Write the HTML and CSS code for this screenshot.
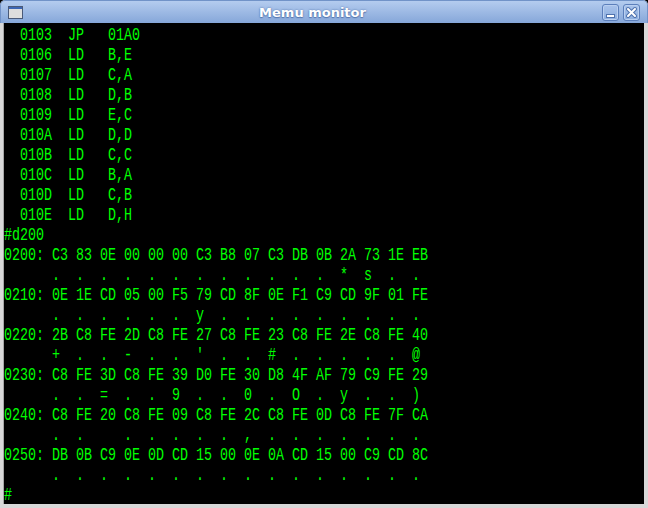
FILE: index.html
```html
<!DOCTYPE html>
<html lang="en">
<head>
    <meta charset="UTF-8">
    <title>Memu monitor</title>
    <link rel="stylesheet" href="styles.css">
</head>
<body>
    <div class="window">
        <div class="titlebar">
            <span class="app-icon">
                <svg width="15" height="13" viewBox="0 0 15 13">
                    <rect x="0.5" y="0.5" width="14" height="12" fill="#e6e6e6" stroke="#4a5a78"/>
                    <rect x="1" y="1" width="13" height="2" fill="#3d66b3"/>
                    <rect x="1" y="3" width="13" height="9" fill="#d9d9d9" opacity="0.6"/>
                </svg>
            </span>
            <span class="title">Memu monitor</span>
            <span class="controls">
                <button class="wbtn">
                    <svg width="15" height="15" viewBox="0 0 15 15">
                        <rect x="3.5" y="9.5" width="8" height="3" fill="#fff" stroke="#4f72ad"/>
                    </svg>
                </button>
                <button class="wbtn">
                    <svg width="15" height="15" viewBox="0 0 15 15">
                        <path d="M4 4 L11 11 M11 4 L4 11" stroke="#4f72ad" stroke-width="4" stroke-linecap="round"/>
                        <path d="M4 4 L11 11 M11 4 L4 11" stroke="#fff" stroke-width="2" stroke-linecap="round"/>
                    </svg>
                </button>
            </span>
        </div>
        <div class="frame">
            <div class="screen">
<pre class="term">  0103  JP   01A0
  0106  LD   B,E
  0107  LD   C,A
  0108  LD   D,B
  0109  LD   E,C
  010A  LD   D,D
  010B  LD   C,C
  010C  LD   B,A
  010D  LD   C,B
  010E  LD   D,H
#d200
0200: C3 83 0E 00 00 00 C3 B8 07 C3 DB 0B 2A 73 1E EB
      .  .  .  .  .  .  .  .  .  .  .  .  *  s  .  .
0210: 0E 1E CD 05 00 F5 79 CD 8F 0E F1 C9 CD 9F 01 FE
      .  .  .  .  .  .  y  .  .  .  .  .  .  .  .  .
0220: 2B C8 FE 2D C8 FE 27 C8 FE 23 C8 FE 2E C8 FE 40
      +  .  .  -  .  .  '  .  .  #  .  .  .  .  .  @
0230: C8 FE 3D C8 FE 39 D0 FE 30 D8 4F AF 79 C9 FE 29
      .  .  =  .  .  9  .  .  0  .  O  .  y  .  .  )
0240: C8 FE 20 C8 FE 09 C8 FE 2C C8 FE 0D C8 FE 7F CA
      .  .     .  .  .  .  .  ,  .  .  .  .  .  .  .
0250: DB 0B C9 0E 0D CD 15 00 0E 0A CD 15 00 C9 CD 8C
      .  .  .  .  .  .  .  .  .  .  .  .  .  .  .  .
#</pre>
            </div>
        </div>
    </div>
</body>
</html>
```

FILE: styles.css
```css
body { margin: 0; background: #000; font-family: "DejaVu Sans", sans-serif; }
.window { width: 648px; height: 508px; display: flex; flex-direction: column; background: #d6d6d6; border-radius: 5px 5px 0 0; overflow: hidden; }
.titlebar { height: 23px; flex: none; display: flex; align-items: center; box-sizing: border-box; padding: 0 7px 0 7px; background: linear-gradient(#b4ccef, #86a7d9); border: 1px solid #7193c8; border-bottom: none; border-radius: 5px 5px 0 0; }
.app-icon { width: 15px; height: 13px; display: flex; margin-top: 1px; }
.title { flex: 1; text-align: center; color: #fff; font-weight: bold; font-size: 13px; text-shadow: 0 0 2px #4d6fa8, 0 1px 1px #5878b0; }
.controls { display: flex; gap: 4px; }
.wbtn { width: 17px; height: 17px; padding: 0; margin: 0; display: flex; align-items: center; justify-content: center; border: 1px solid #5c7fbb; border-radius: 3px; background: linear-gradient(#a9c3eb, #8badde); box-shadow: inset 0 0 0 1px #b9cff0; }
.frame { flex: 1; display: flex; padding: 0 4px 4px 3px; background: #d8d8d8; min-height: 0; }
.screen { flex: 1; background: #000; border-left: 1px solid #a6a6a6; }
.term { margin: 0; padding-top: 2px; height: 479px; color: #00ff00; font-family: "Liberation Mono", monospace; font-size: 19px; line-height: 20px; transform: scaleX(0.7018); transform-origin: 0 0; }
```
